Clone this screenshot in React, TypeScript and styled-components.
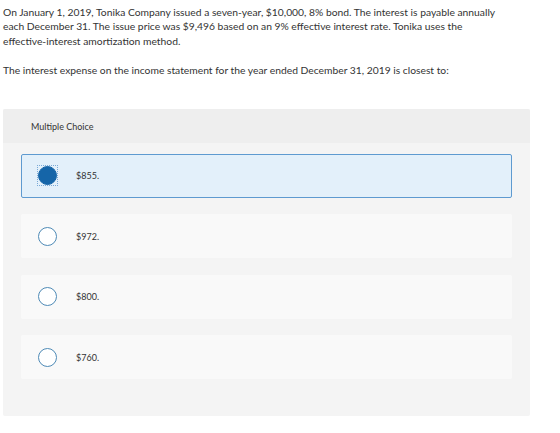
import styled, { createGlobalStyle } from "styled-components";

const GlobalStyle = createGlobalStyle`
  body {
    margin: 0;
    background: #ffffff;
    font-family: Lato, "Open Sans", "Liberation Sans", sans-serif;
    color: #333333;
  }
`;

const choices = [
  { id: "a", label: "$855.", checked: true },
  { id: "b", label: "$972.", checked: false },
  { id: "c", label: "$800.", checked: false },
  { id: "d", label: "$760.", checked: false },
];

const App = () => {
  return (
    <Page>
      <GlobalStyle />
      <Question>
        <p>
          On January 1, 2019, Tonika Company issued a seven-year, $10,000, 8%
          bond. The interest is payable annually each December 31. The issue
          price was $9,496 based on an 9% effective interest rate. Tonika uses
          the effective-interest amortization method.
        </p>
        <p>
          The interest expense on the income statement for the year ended
          December 31, 2019 is closest to:
        </p>
      </Question>
      <Panel>
        <PanelHeader>Multiple Choice</PanelHeader>
        <ChoiceList>
          {choices.map((c) => (
            <Choice key={c.id} $checked={c.checked}>
              <RadioWrap $focused={c.checked}>
                <Radio $checked={c.checked} />
              </RadioWrap>
              <ChoiceLabel>{c.label}</ChoiceLabel>
            </Choice>
          ))}
        </ChoiceList>
      </Panel>
    </Page>
  );
};

const Page = styled.div`
  padding: 5px 3px 0;
  width: 527px;
`;

const Question = styled.div`
  font-size: 10.3px;
  line-height: 14.4px;
  width: 496px;
  p {
    margin: 0 0 14.4px;
  }
  p:last-child {
    margin-bottom: 0;
  }
`;

const Panel = styled.section`
  margin-top: 32px;
  background: #f4f4f4;
  border-radius: 2px;
  padding-bottom: 37px;
`;

const PanelHeader = styled.div`
  height: 34px;
  background: #eeeeee;
  border-radius: 2px 2px 0 0;
  display: flex;
  align-items: center;
  padding-left: 28px;
  font-size: 9px;
  color: #333333;
`;

const ChoiceList = styled.div`
  display: flex;
  flex-direction: column;
  gap: 16.5px;
  padding: 10.5px 18px 0 18px;
`;

const Choice = styled.div<{ $checked: boolean }>`
  height: 44px;
  box-sizing: border-box;
  display: flex;
  align-items: center;
  padding-left: 15px;
  border-radius: 2px;
  background: ${(p) => (p.$checked ? "#e3f0fa" : "#f9f9f9")};
  border: 1px solid ${(p) => (p.$checked ? "#5e9ad0" : "transparent")};
`;

const RadioWrap = styled.span<{ $focused: boolean }>`
  width: 21px;
  height: 21px;
  box-sizing: border-box;
  display: flex;
  align-items: center;
  justify-content: center;
  border: 1px dotted ${(p) => (p.$focused ? "#7aa9d6" : "transparent")};
`;

const Radio = styled.span<{ $checked: boolean }>`
  width: 19px;
  height: 19px;
  box-sizing: border-box;
  border-radius: 50%;
  background: ${(p) => (p.$checked ? "#1565a8" : "#ffffff")};
  border: 1.5px solid ${(p) => (p.$checked ? "#1565a8" : "#4e8ab6")};
`;

const ChoiceLabel = styled.span`
  margin-left: 18px;
  font-size: 9px;
  color: #333333;
`;

export default App;
